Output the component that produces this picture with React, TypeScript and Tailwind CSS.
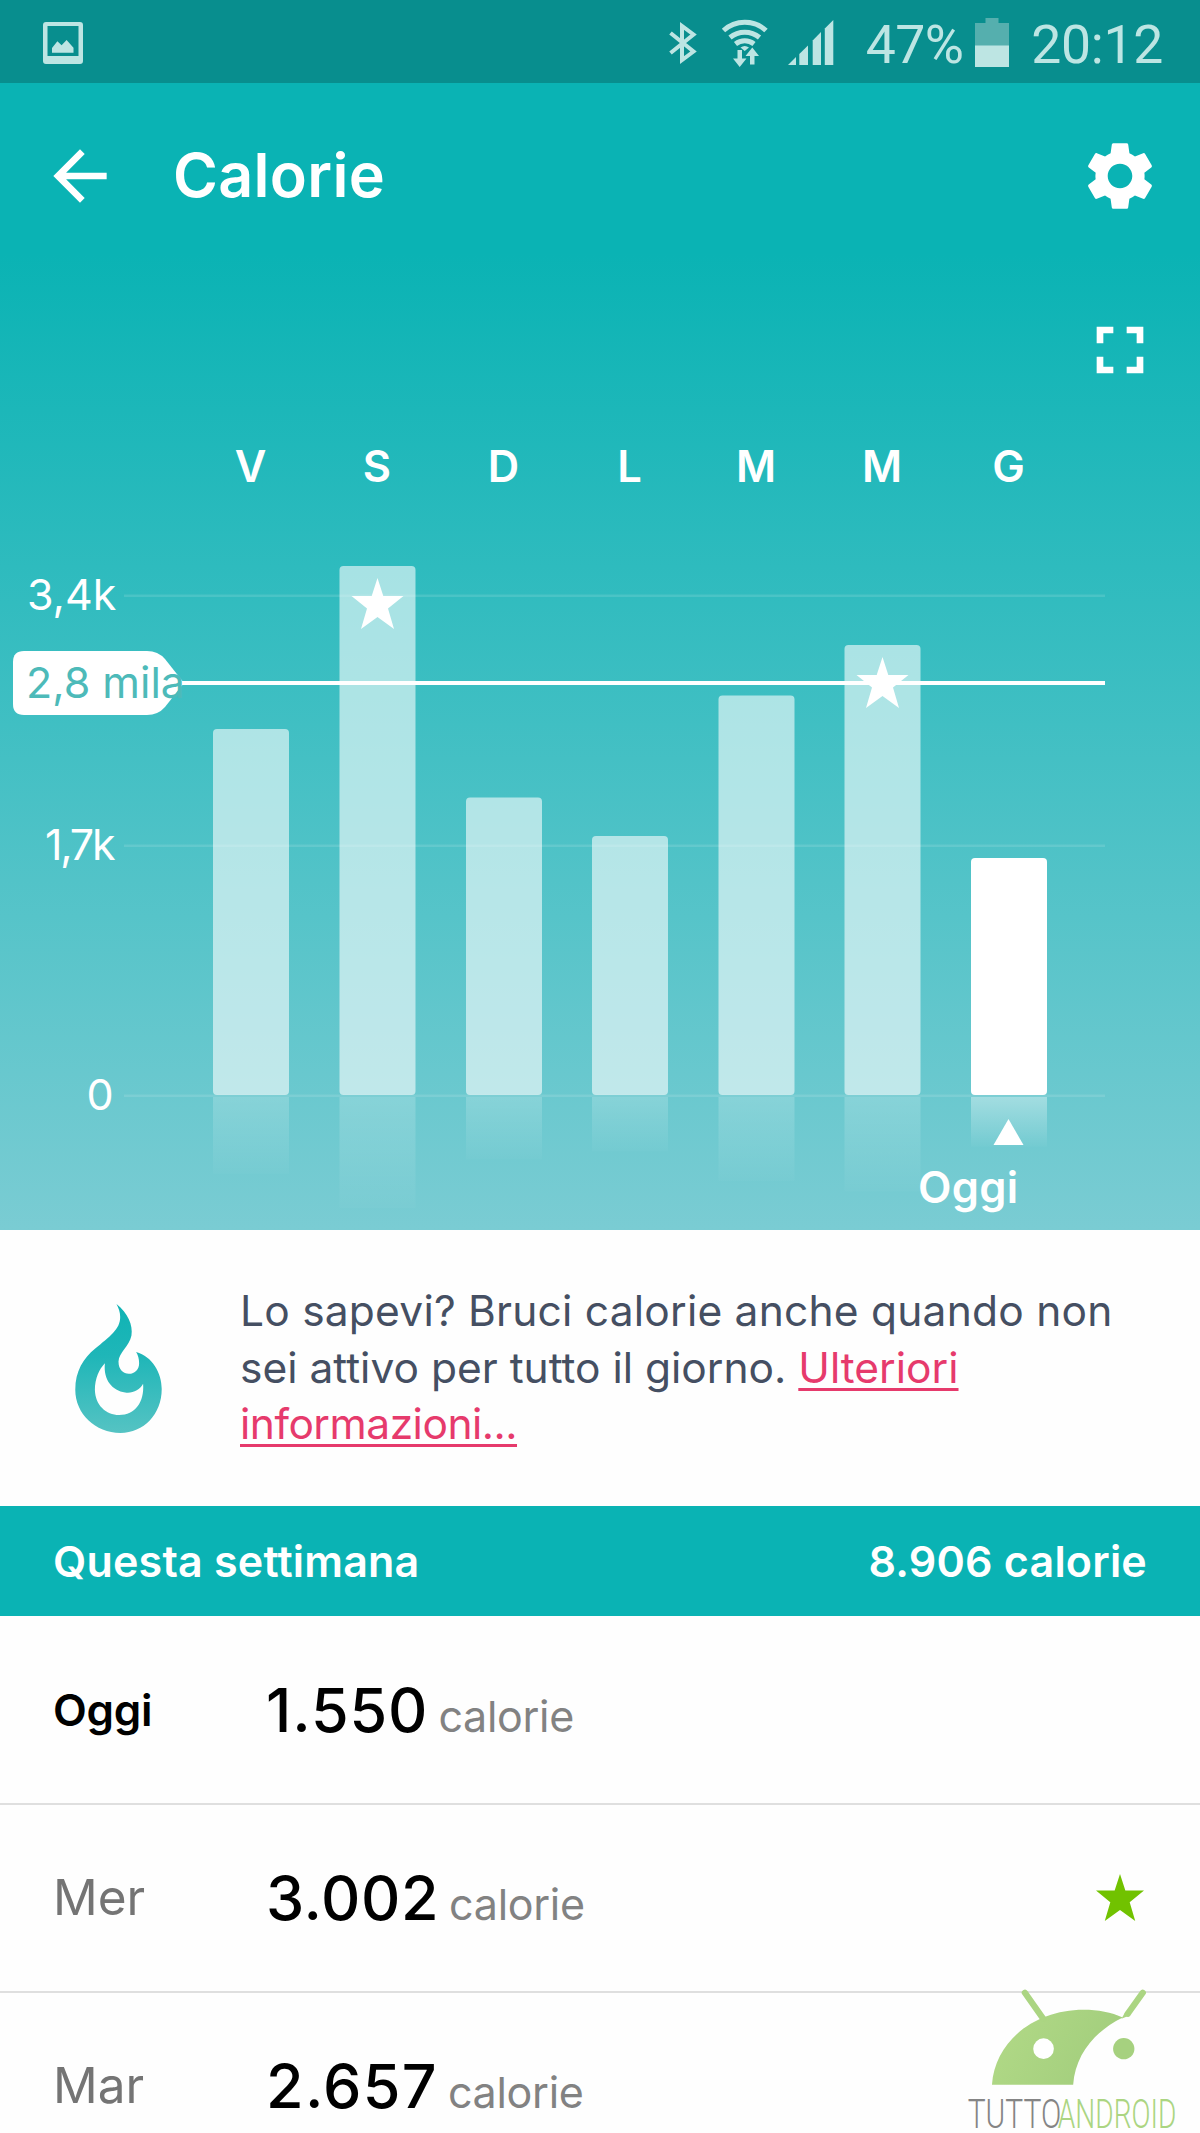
import { MdArrowBack, MdFullscreen, MdSettings } from "react-icons/md";

interface Bar {
  day: string;
  x: number;
  top: number;
  goal?: boolean;
  today?: boolean;
}

interface Day {
  label: string;
  value: string;
  spacing: string;
  goal?: boolean;
  today?: boolean;
}

const BASELINE = 675;

const bars: Bar[] = [
  { day: "V", x: 213, top: 309 },
  { day: "S", x: 339.5, top: 146, goal: true },
  { day: "D", x: 466, top: 377.5 },
  { day: "L", x: 592, top: 416 },
  { day: "M", x: 718.5, top: 275.5 },
  { day: "M", x: 844.5, top: 225, goal: true },
  { day: "G", x: 971, top: 438, today: true },
];

const days: Day[] = [
  { label: "Oggi", value: "1.550", spacing: "tracking-[0.9px]", today: true },
  { label: "Mer", value: "3.002", spacing: "tracking-[0.6px]", goal: true },
  { label: "Mar", value: "2.657", spacing: "tracking-[1.3px]" },
];

const STAR = "M0 -26 L5.8 -8 L26 -8 L10.5 4.5 L16.5 25 L0 13 L-16.5 25 L-10.5 4.5 L-26 -8 L-5.8 -8 Z";

function StatusBar() {
  return (
    <div className="h-[83px] bg-[#088e8e] flex items-center justify-between pl-[43px] pr-[37px] text-[#bde5e3]">
      <svg className="w-10 h-[42px] mt-[3px]" viewBox="43 22 40 42" fill="currentColor">
        <path
          fillRule="evenodd"
          d="M46 22 H80 Q83 22 83 25 V61 Q83 64 80 64 H46 Q43 64 43 61 V25 Q43 22 46 22 Z M47.5 26 V56 H78.5 V26 Z"
        />
        <path d="M52 48 L57.4 41.3 L61.6 45.3 L66.6 40 L73.5 47.7 V52.7 H52 Z" />
      </svg>

      <div className="flex items-center">
        <svg className="w-[166px] h-[50px] mt-[3px]" viewBox="667 18 166 50" fill="none" stroke="currentColor" strokeWidth="4">
          <path d="M669.5 53 L692.5 34.5 L681 26 V60 L692.5 51.5 L669.5 33" />
          <g strokeWidth="5">
            <path d="M722.5 30.5 A31.5 31.5 0 0 1 765 30.5" />
            <path d="M729 37.5 A23 23 0 0 1 758.5 37.5" />
            <path d="M734.5 44 A15 15 0 0 1 753 44" />
          </g>
          <g fill="currentColor" stroke="none">
            <path d="M739.5 47.5 Q743.7 44.5 748 47.5 L743.7 51 Z" />
            <path d="M736.5 50 H741 V58.5 H745.5 L738.7 67 L732 58.5 H736.5 Z" />
            <path d="M749 64.5 V56 H744.5 L751.3 47.5 L758 56 H753.5 V64.5 Z" />
            <path d="M787 65 L795 57 V65 Z" />
            <path d="M798.3 54 L807 45.5 V65 H798.3 Z" />
            <path d="M811.7 40.5 L820 32 V65 H811.7 Z" />
            <path d="M823.8 28.5 L832.3 20 V65 H823.8 Z" />
          </g>
        </svg>
        <span className="ml-8 text-[53.5px] leading-none font-normal font-['Roboto',sans-serif] tracking-[-0.6px] mt-1.5">
          47%
        </span>
        <svg className="w-[34px] h-[49px] ml-3 mt-0.5" viewBox="0 0 34 49">
          <path d="M10.5 0 H23.5 V5 H34 V28 H0 V5 H10.5 Z" fill="#55afae" />
          <path d="M0 27.5 H34 V49 H0 Z" fill="currentColor" />
        </svg>
        <span className="ml-[22px] text-[53.5px] leading-none font-normal font-['Roboto',sans-serif] tracking-[-0.3px] mt-1.5">
          20:12
        </span>
      </div>
    </div>
  );
}

function CaloriesChart() {
  return (
    <svg className="block w-[1200px] h-[810px] font-['Inter',sans-serif]" viewBox="0 0 1200 810" fill="#fff">
      <defs>
        <linearGradient id="reflection" x1="0" y1="0" x2="0" y2="1">
          <stop offset="0" stopColor="#fff" stopOpacity="0.19" />
          <stop offset="1" stopColor="#fff" stopOpacity="0.02" />
        </linearGradient>
        <linearGradient id="reflectionToday" x1="0" y1="0" x2="0" y2="1">
          <stop offset="0" stopColor="#fff" stopOpacity="0.38" />
          <stop offset="1" stopColor="#fff" stopOpacity="0.02" />
        </linearGradient>
      </defs>

      {bars.map((bar) => (
        <g key={bar.x}>
          <text x={bar.x + 37.5} y="61.5" textAnchor="middle" className="text-[43.5px] font-semibold">
            {bar.day}
          </text>
          <rect
            x={bar.x}
            y={bar.top}
            width="76"
            height={BASELINE - bar.top}
            rx="4"
            fillOpacity={bar.today ? 1 : 0.58}
          />
          <rect
            x={bar.x}
            y={BASELINE + 2}
            width="76"
            height={(BASELINE - bar.top) * 0.21}
            fill={bar.today ? "url(#reflectionToday)" : "url(#reflection)"}
          />
        </g>
      ))}

      {/* grid and axis labels */}
      <g fillOpacity="0.12">
        <rect x="124" y="174.5" width="981" height="2.5" />
        <rect x="124" y="424.5" width="981" height="2.5" />
        <rect x="124" y="674.5" width="981" height="2.5" />
      </g>
      <text x="27" y="190" className="text-[43px]">3,4k</text>
      <text x="45" y="440" className="text-[43px] tracking-[-2.2px]">1,7k</text>
      <text x="86.5" y="690" className="text-[43px]">0</text>

      {/* daily goal */}
      <rect x="182" y="261" width="923" height="4" />
      <path d="M24 231 H147 Q158 231 165 239 L184 263 L165 287 Q158 295 147 295 H24 Q13 295 13 284 V242 Q13 231 24 231 Z" />
      <text x="26" y="278" fill="#4dbab9" className="text-[43px]">
        2,8 mila
      </text>

      {bars
        .filter((bar) => bar.goal)
        .map((bar) => (
          <path key={bar.x} d={STAR} transform={`translate(${bar.x + 38} ${bar.top + 38})`} />
        ))}

      <path d="M1008.5 699 L1023.5 725 H993.5 Z" />
      <text x="918" y="783" className="text-[43.5px] font-semibold tracking-[0.3px]">
        Oggi
      </text>
    </svg>
  );
}

function FlameIcon() {
  return (
    <svg className="w-[87px] h-[129px] shrink-0" viewBox="74 42 260 388">
      <defs>
        <linearGradient id="flame" x1="0" y1="0" x2="0" y2="1">
          <stop offset="0" stopColor="#0fb3b4" />
          <stop offset="0.4" stopColor="#1fb6b8" />
          <stop offset="1" stopColor="#55c3c3" />
        </linearGradient>
      </defs>
      <path
        fill="url(#flame)"
        fillRule="evenodd"
        d="M198 42 C232 70 248 105 243 137 C236 170 205 188 204 215 C204 240 219 252 235 252 C254 252 266 238 266 220 C266 206 263 196 257 186 C306 200 334 248 334 298 C334 374 280 430 210 430 C134 430 74 372 74 300 C74 244 98 206 134 176 C176 140 210 118 209 80 C209 66 204 54 198 42 Z
        M163 220 C146 238 133 266 133 300 C134 346 166 376 206 376 C254 376 282 338 278 282 C268 302 246 311 224 308 C186 302 158 272 163 220 Z"
      />
    </svg>
  );
}

function Watermark() {
  return (
    <svg className="absolute right-[20px] bottom-0 w-[213px] h-[145px] overflow-visible" viewBox="200 445 640 435">
      <defs>
        <linearGradient id="robot" x1="0" y1="0" x2="1" y2="0.3">
          <stop offset="0" stopColor="#b2da87" />
          <stop offset="1" stopColor="#a3ce7d" />
        </linearGradient>
      </defs>
      <path d="M275 735 C284 604 404 510 550 510 C594 510 634 518 668 533 C584 574 526 644 519 735 Z" fill="url(#robot)" />
      <g stroke="#abd582" strokeWidth="19" strokeLinecap="round">
        <path d="M374 459 L429 537" />
        <path d="M728 459 L683 522" />
      </g>
      <path d="M664 537 L676 516 L692 526 Z" fill="#abd582" />
      <circle cx="430" cy="627" r="31" fill="#fff" />
      <circle cx="671" cy="627" r="32" fill="#a6d17f" />
      <g className="text-[121px] font-light font-['Roboto',sans-serif]">
        <text x="202" y="866" textLength="281" lengthAdjust="spacingAndGlyphs" fill="#858585">
          TUTTO
        </text>
        <text x="473" y="866" textLength="356" lengthAdjust="spacingAndGlyphs" fill="#abd582">
          ANDROID
        </text>
      </g>
    </svg>
  );
}

export default function App() {
  return (
    <div className="relative w-[1200px] h-[2133px] overflow-hidden bg-[#fefefe] font-['Inter',sans-serif]">
      <StatusBar />

      <div className="h-[1147px] text-white bg-[linear-gradient(to_bottom,#0ab3b4_0px,#0ab3b4_170px,#7accd3_1147px)]">
        <div className="h-[186px] pl-10 pr-[39px] flex items-center">
          <MdArrowBack className="size-20" />
          <h1 className="ml-[53px] mb-[2px] text-[61px] leading-none font-semibold tracking-[0.3px]">Calorie</h1>
          <MdSettings className="size-[82px] ml-auto" />
        </div>
        <div className="h-[151px] px-10 pt-[10px] flex items-center justify-end">
          <MdFullscreen className="size-20" />
        </div>
        <CaloriesChart />
      </div>

      <div className="h-[276px] pl-[75px] pt-[53px] flex gap-[78px]">
        <div className="pt-[21px]">
          <FlameIcon />
        </div>
        <p className="w-[920px] text-[42.5px] leading-[56.5px] text-[#454f62]">
          <span className="tracking-[0.22px]">Lo sapevi? Bruci calorie anche quando non</span>
          <br />
          sei attivo per tutto il giorno.{" "}
          <a className="text-[#e63a6c] underline decoration-[3px] underline-offset-[5px] [text-decoration-skip-ink:none]">
            Ulteriori
            <br />
            <span className="tracking-[-0.5px]">informazioni...</span>
          </a>
        </p>
      </div>

      <div className="h-[110px] pl-[53px] pr-[53px] flex items-center justify-between bg-[#0ab3b4] text-white text-[43px] font-semibold">
        <span className="tracking-[0.2px]">Questa settimana</span>
        <span className="tracking-[0.2px]">8.906 calorie</span>
      </div>

      <div className="pt-px">
        {days.map((day) => (
          <div key={day.label} className="h-[188px] pl-[53px] pr-14 flex items-center border-b-2 border-[#dfdfdf] leading-none">
            <span className={day.today ? "w-[213px] text-[44px] font-semibold text-black tracking-[-0.3px]" : "w-[213px] text-[49.5px] text-[#747474]"}>
              {day.label}
            </span>
            <div className="flex items-baseline">
              <span className={`text-[61px] font-[450] text-black ${day.spacing}`}>{day.value}</span>
              <span className="ml-[10px] text-[43px] tracking-[-0.3px] text-[#828282]">calorie</span>
            </div>
            {day.goal && (
              <svg className="w-12 h-12 ml-auto" viewBox="-26 -26 52 52" fill="#71c200">
                <path d={STAR} />
              </svg>
            )}
          </div>
        ))}
      </div>

      <Watermark />
    </div>
  );
}
